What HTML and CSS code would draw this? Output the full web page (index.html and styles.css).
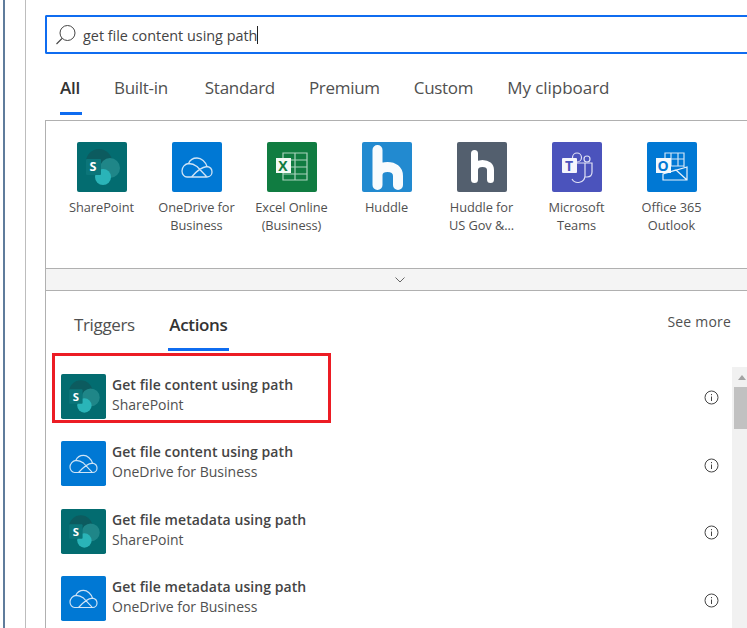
FILE: index.html
```html
<!DOCTYPE html>
<html lang="en">
<head>
<meta charset="utf-8">
<title>Choose an operation</title>
<link rel="stylesheet" href="styles.css">
</head>
<body>
<svg class="defs" width="0" height="0" aria-hidden="true">
  <symbol id="sp" viewBox="0 0 50 50">
    <rect width="50" height="50" rx="2" fill="#036c70"/>
    <circle cx="22" cy="20" r="13" fill="#0c5b5f"/>
    <circle cx="33" cy="26" r="10" fill="#1f8688"/>
    <circle cx="26" cy="35" r="8" fill="#2ab4b8"/>
    <rect x="9" y="17" width="15" height="16" rx="1" fill="#0b7579"/>
  </symbol>
  <symbol id="od" viewBox="0 0 50 50">
    <rect width="50" height="50" rx="2" fill="#0078d4"/>
    <path d="M15 35h20c3.200 0 5-2.500 5-5 0-3-2-5-5-5.500C33.500 20 29.500 16 25 16c-4 0-7 2-8.500 5.500C13 22 10 25 10 29c0 3.500 2.500 6 5 6zM16.500 21.500c3.500 0 6 1 8.500 3L34.500 34.500M35 24.500c-5 .5-10 4-15.500 10.500" fill="none" stroke="#cfe4f6" stroke-width="1.300" stroke-linejoin="round"/>
  </symbol>
  <symbol id="xl" viewBox="0 0 50 50">
    <rect width="50" height="50" rx="2" fill="#107c41"/>
    <path d="M16 11h24v27H16zM28 11v27M16 18h24M16 25h24M16 32h24" fill="none" stroke="#a9d3bd" stroke-width="1.200"/>
    <rect x="9" y="16" width="15" height="15" fill="#f4faf6"/>
  </symbol>
  <symbol id="hu" viewBox="0 0 50 50">
    <rect width="50" height="50" rx="2" fill="#228ad0"/>
    <path d="M15.500 8v35M15.500 33c0-5 4-8 10-8s10.500 3 10.500 9v9" fill="none" stroke="#f8fbfd" stroke-width="10" stroke-linecap="round"/>
  </symbol>
  <symbol id="hg" viewBox="0 0 50 50">
    <rect width="50" height="50" rx="2" fill="#535f6e"/>
    <path d="M17.500 11.500v26M17.500 28c0-4 3-6.500 8-6.500s8 2.500 8 6.500v9.500" fill="none" stroke="#fff" stroke-width="7" stroke-linecap="round"/>
  </symbol>
  <symbol id="te" viewBox="0 0 50 50">
    <rect width="50" height="50" rx="2" fill="#4b53bc"/>
    <circle cx="25" cy="15.500" r="4.500" fill="none" stroke="#dfe1f5" stroke-width="1.200"/>
    <circle cx="35" cy="17" r="3" fill="none" stroke="#dfe1f5" stroke-width="1.200"/>
    <path d="M25 21h8v13a7 7 0 0 1-13 3M33 21h7v9c0 3-2 5-5 5h-2" fill="none" stroke="#dfe1f5" stroke-width="1.200"/>
    <rect x="10" y="16" width="15" height="15" rx="1" fill="#f4f5fc"/>
  </symbol>
  <symbol id="ol" viewBox="0 0 50 50">
    <rect width="50" height="50" rx="2" fill="#0078d4"/>
    <path d="M18 16v-5h19v14M24 11v13M31 11v13M18 17h19M24 24h13" fill="none" stroke="#cfe4f6" stroke-width="1.200"/>
    <path d="M16 32v6h24V25zM16 32l13-4 11 10" fill="none" stroke="#e8f2fb" stroke-width="1.200"/>
    <rect x="9" y="16" width="15" height="15" fill="#f4f9fd"/>
  </symbol>
  <symbol id="info" viewBox="0 0 15 15">
    <circle cx="7.500" cy="7.500" r="6.500" fill="none" stroke="#444" stroke-width="1"/>
    <path d="M7.500 6.500v4.500M7.500 4v1.200" stroke="#444" stroke-width="1" fill="none"/>
  </symbol>
</svg>

<div class="page">
  <main class="main">
    <div class="search">
      <svg class="search-icon" viewBox="0 0 20 20" aria-hidden="true"><circle cx="11.500" cy="8" r="7.500" fill="none" stroke="#444" stroke-width="1"/><path d="M6 13.500 .5 19" stroke="#444" stroke-width="1.100" fill="none"/></svg>
      <span class="query">get file content using path</span><span class="caret"></span>
    </div>

    <nav class="tabs">
      <span class="tab tab-on">All</span>
      <span class="tab tab-builtin">Built-in</span>
      <span class="tab">Standard</span>
      <span class="tab">Premium</span>
      <span class="tab">Custom</span>
      <span class="tab tab-last">My clipboard</span>
    </nav>

    <section class="panel">
      <div class="connectors">
        <div class="conn"><span class="ico ico-lg"><svg><use href="#sp"/></svg><i class="mark mark-s">S</i></span><span class="label">SharePoint</span></div>
        <div class="conn"><span class="ico ico-lg"><svg><use href="#od"/></svg></span><span class="label">OneDrive for Business</span></div>
        <div class="conn"><span class="ico ico-lg"><svg><use href="#xl"/></svg><i class="mark mark-x">X</i></span><span class="label">Excel Online (Business)</span></div>
        <div class="conn"><span class="ico ico-lg"><svg><use href="#hu"/></svg></span><span class="label">Huddle</span></div>
        <div class="conn"><span class="ico ico-lg"><svg><use href="#hg"/></svg></span><span class="label">Huddle for<br>US Gov &amp;...</span></div>
        <div class="conn"><span class="ico ico-lg"><svg><use href="#te"/></svg><i class="mark mark-t">T</i></span><span class="label">Microsoft Teams</span></div>
        <div class="conn"><span class="ico ico-lg"><svg><use href="#ol"/></svg><i class="mark mark-o">O</i></span><span class="label">Office 365 Outlook</span></div>
      </div>

      <div class="expander">
        <svg class="chev" viewBox="0 0 10 6" aria-hidden="true"><path d="M.5.500 5 5 9.500.5" fill="none" stroke="#666" stroke-width="1"/></svg>
      </div>

      <div class="subhead">
        <div class="subtabs">
          <span class="subtab">Triggers</span>
          <span class="subtab subtab-on">Actions</span>
        </div>
        <span class="see-more">See more</span>
      </div>

      <div class="results">
        <div class="highlight"></div>
        <div class="row">
          <span class="ico ico-sm"><svg><use href="#sp"/></svg><i class="mark mark-s">S</i></span>
          <div class="row-text"><b>Get file content using path</b><span>SharePoint</span></div>
          <svg class="info"><use href="#info"/></svg>
        </div>
        <div class="row">
          <span class="ico ico-sm"><svg><use href="#od"/></svg></span>
          <div class="row-text"><b>Get file content using path</b><span>OneDrive for Business</span></div>
          <svg class="info"><use href="#info"/></svg>
        </div>
        <div class="row">
          <span class="ico ico-sm"><svg><use href="#sp"/></svg><i class="mark mark-s">S</i></span>
          <div class="row-text"><b>Get file metadata using path</b><span>SharePoint</span></div>
          <svg class="info"><use href="#info"/></svg>
        </div>
        <div class="row">
          <span class="ico ico-sm"><svg><use href="#od"/></svg></span>
          <div class="row-text"><b>Get file metadata using path</b><span>OneDrive for Business</span></div>
          <svg class="info"><use href="#info"/></svg>
        </div>
        <div class="scrollbar"><i class="arrow"></i><i class="thumb"></i></div>
      </div>
    </section>
  </main>
</div>
</body>
</html>
```

FILE: styles.css
```css
* { box-sizing: border-box; }

html, body {
  margin: 0;
  height: 100%;
  overflow: hidden;
  background: #fff;
}

body {
  font-family: "Open Sans", "Noto Sans", "Liberation Sans", sans-serif;
  color: #444;
}

.defs { position: absolute; }

.page {
  height: 628px;
  margin-left: 3px;
  padding-left: 20px;
  border-left: 2px solid #5f7c9c;
}

.main {
  height: 100%;
  padding: 15px 0 0 19px;
  border-left: 1px solid #bdbdbd;
  overflow: hidden;
}

.search {
  display: flex;
  align-items: center;
  height: 39px;
  padding-left: 9px;
  border: 2px solid #0f6cf0;
  border-right: 0;
  border-radius: 2px 0 0 2px;
}

.search-icon { width: 20px; height: 20px; margin-right: 7px; }

.query {
  margin-top: 2px;
  font-size: 14.4px;
  color: #444;
}

.caret {
  width: 1px;
  height: 18px;
  background: #222;
}

.tabs {
  display: flex;
  gap: 34px;
  height: 66px;
  padding: 18px 0 0 15px;
}

.tab {
  height: 43px;
  padding-top: 4px;
  font-size: 17px;
  letter-spacing: -.3px;
  line-height: 24px;
  color: #505050;
}

.tab-on {
  width: 22px;
  margin-right: -2px;
  font-weight: 600;
  color: #333;
  border-bottom: 3px solid #0f6cf0;
}

.tab-builtin { margin-right: 3px; }
.tab-last { letter-spacing: -.05px; }

.panel {
  height: 520px;
  border: 1px solid #b0b0b0;
  border-right: 0;
}

.connectors {
  display: flex;
  height: 147px;
  padding: 21px 0 0 8px;
}

.conn {
  display: flex;
  flex-direction: column;
  align-items: center;
  width: 95px;
  font-size: 12.8px;
  letter-spacing: -.05px;
  line-height: 18px;
  text-align: center;
  color: #505050;
}

.ico {
  position: relative;
  display: block;
  flex: none;
}
.ico svg { display: block; width: 100%; height: 100%; }
.ico-lg { width: 50px; height: 50px; margin-bottom: 6px; font-size: 14px; }
.ico-sm { width: 45px; height: 45px; margin-right: 6px; font-size: 12.6px; }

.mark {
  position: absolute;
  left: 18%;
  top: 32%;
  display: flex;
  align-items: center;
  justify-content: center;
  width: 30%;
  height: 30%;
  font-style: normal;
  font-weight: 700;
  line-height: 1;
  letter-spacing: 0;
}
.mark-s { top: 35%; color: #fff; font-size: .9em; }
.mark-x { color: #107c41; }
.mark-t { left: 20%; color: #4b53bc; }
.mark-o { color: #0078d4; }

.label { display: block; width: 82px; }

.expander {
  display: flex;
  align-items: center;
  justify-content: center;
  height: 23px;
  background: #f4f4f4;
  border-top: 1px solid #b0b0b0;
  border-bottom: 1px solid #b0b0b0;
}

.chev { width: 10px; height: 6px; margin-left: 6px; }

.subhead {
  display: flex;
  justify-content: space-between;
  height: 61px;
  padding: 0 16px 0 28px;
}

.subtabs { display: flex; gap: 33px; }

.subtab {
  height: 60px;
  padding-top: 21px;
  font-size: 17px;
  letter-spacing: -.35px;
  line-height: 26px;
  text-align: center;
  white-space: nowrap;
  color: #505050;
}

.subtab-on {
  width: 61px;
  font-weight: 600;
  color: #333;
  border-bottom: 3px solid #0f6cf0;
}

.see-more {
  padding-top: 21px;
  font-size: 14px;
  letter-spacing: .2px;
  line-height: 20px;
  color: #505050;
}

.results {
  position: relative;
  padding: 21.75px 0 0 15px;
}

.highlight {
  position: absolute;
  left: 6px;
  top: 1px;
  width: 279px;
  height: 70px;
  border: 3px solid #ec1c24;
}

.row {
  display: flex;
  align-items: flex-start;
  height: 67.5px;
}

.row-text {
  display: flex;
  flex: 1;
  flex-direction: column;
  padding-top: 1px;
  font-size: 14px;
  line-height: 20px;
  color: #505050;
}
.row-text b { font-weight: 600; letter-spacing: .07px; color: #444; }

.info {
  flex: none;
  width: 15px;
  height: 15px;
  margin: 16.5px 28px 0 0;
}

.scrollbar {
  position: absolute;
  top: 15px;
  right: 0;
  width: 15px;
  height: 262px;
  background: #f1f1f1;
}

.arrow {
  display: block;
  width: 0;
  margin: 8px 0 0 6px;
  border: 4px solid transparent;
  border-top: 0;
  border-bottom: 5px solid #a3a3a3;
}

.thumb {
  display: block;
  height: 42px;
  margin: 7px 0 0 2px;
  background: #c1c1c1;
}
```
